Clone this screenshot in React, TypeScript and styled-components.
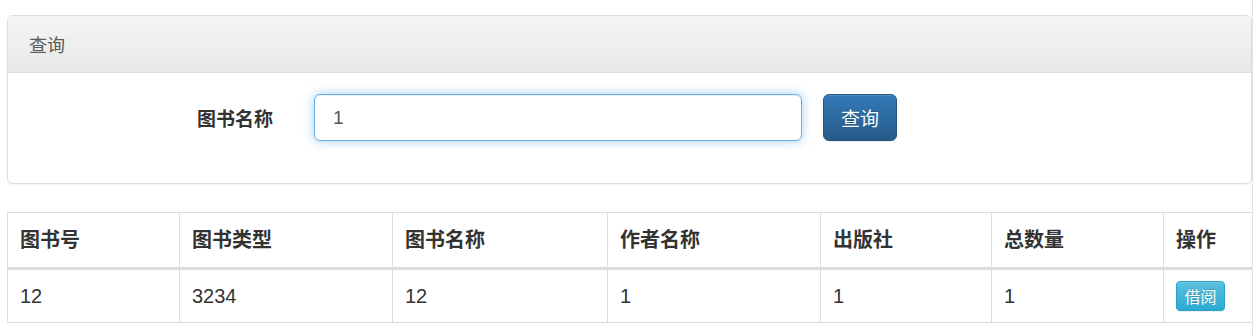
import React from "react";
import styled, { createGlobalStyle } from "styled-components";

const GlobalStyle = createGlobalStyle`
  html, body { margin: 0; padding: 0; background: #fff; }
  body {
    font-family: "Liberation Sans", "Noto Sans CJK SC", sans-serif;
    color: #333;
  }
  * { box-sizing: border-box; }
`;

const Page = styled.div`
  width: 1254px;
  min-height: 336px;
  padding: 15px 0 0 7px;
  display: flex;
  flex-direction: column;
  gap: 28px;
  position: relative;
  &::after {
    content: "";
    position: absolute;
    top: 0;
    bottom: 0;
    left: 1252px;
    width: 1px;
    background: #e2e2e2;
  }
`;

const Panel = styled.section`
  width: 1245px;
  border: 1px solid #dddddd;
  border-radius: 6px;
  box-shadow: 0 1px 2px rgba(0, 0, 0, 0.05);
  background: #fff;
  overflow: hidden;
`;

const PanelHeading = styled.div`
  height: 57px;
  padding: 0 21px;
  display: flex;
  align-items: center;
  font-size: 18px;
  color: #5a5a5a;
  background-image: linear-gradient(to bottom, #f5f5f5 0, #e8e8e8 100%);
  border-bottom: 1px solid #dddddd;
`;

const PanelBody = styled.div`
  padding: 21px 21px 42px;
`;

const FormRow = styled.form`
  display: flex;
  align-items: center;
  height: 47px;
`;

const Label = styled.label`
  width: 285px;
  padding-right: 41px;
  text-align: right;
  font-size: 19px;
  font-weight: bold;
  color: #333;
`;

const Input = styled.input`
  width: 488px;
  height: 47px;
  padding: 0 18px;
  font-family: "Liberation Sans", "Noto Sans CJK SC", sans-serif;
  font-size: 19px;
  color: #555;
  border: 1px solid #66afe9;
  border-radius: 6px;
  outline: none;
  box-shadow: inset 0 1px 1px rgba(0, 0, 0, 0.075), 0 0 11px rgba(102, 175, 233, 0.6);
`;

const Button = styled.button<{ $variant?: "primary" | "info"; $size?: "md" | "sm" }>`
  margin-left: ${(p) => (p.$size === "sm" ? "0" : "21px")};
  width: ${(p) => (p.$size === "sm" ? "49px" : "74px")};
  height: ${(p) => (p.$size === "sm" ? "30px" : "47px")};
  padding: 0;
  font-family: "Liberation Sans", "Noto Sans CJK SC", sans-serif;
  font-size: ${(p) => (p.$size === "sm" ? "16px" : "19px")};
  color: #fff;
  border-radius: ${(p) => (p.$size === "sm" ? "4px" : "6px")};
  border: 1px solid ${(p) => (p.$variant === "info" ? "#28a4c9" : "#245580")};
  background-image: ${(p) =>
    p.$variant === "info"
      ? "linear-gradient(to bottom, #5bc0de 0, #2aabd2 100%)"
      : "linear-gradient(to bottom, #337ab7 0, #265a88 100%)"};
  text-shadow: 0 -1px 0 rgba(0, 0, 0, 0.2);
  box-shadow: inset 0 1px 0 rgba(255, 255, 255, 0.15), 0 1px 1px rgba(0, 0, 0, 0.075);
  cursor: pointer;
  display: flex;
  align-items: center;
  justify-content: center;
`;

const Table = styled.table`
  width: 1245px;
  table-layout: fixed;
  border-collapse: collapse;
  border: 1px solid #dddddd;
`;

const Th = styled.th`
  text-align: left;
  padding: 16px 12px;
  line-height: 22px;
  font-size: 20px;
  font-weight: bold;
  color: #333;
  border: 1px solid #dddddd;
  border-bottom: 3px solid #dddddd;
`;

const Td = styled.td<{ $action?: boolean }>`
  padding: ${(p) => (p.$action ? "11px 12px" : "15px 12px")};
  line-height: 22px;
  font-size: 20px;
  color: #333;
  border: 1px solid #dddddd;
  vertical-align: middle;
`;

const columns = [
  { title: "图书号", width: 172 },
  { title: "图书类型", width: 213 },
  { title: "图书名称", width: 215 },
  { title: "作者名称", width: 213 },
  { title: "出版社", width: 171 },
  { title: "总数量", width: 172 },
  { title: "操作", width: 89 },
];

const rows = [["12", "3234", "12", "1", "1", "1"]];

export default function App() {
  return (
    <>
      <GlobalStyle />
      <Page>
        <Panel>
          <PanelHeading>查询</PanelHeading>
          <PanelBody>
            <FormRow onSubmit={(e) => e.preventDefault()}>
              <Label htmlFor="bookName">图书名称</Label>
              <Input id="bookName" defaultValue="1" />
              <Button type="submit" $variant="primary">查询</Button>
            </FormRow>
          </PanelBody>
        </Panel>
        <Table>
          <colgroup>
            {columns.map((c) => (
              <col key={c.title} style={{ width: c.width }} />
            ))}
          </colgroup>
          <thead>
            <tr>
              {columns.map((c) => (
                <Th key={c.title}>{c.title}</Th>
              ))}
            </tr>
          </thead>
          <tbody>
            {rows.map((r, i) => (
              <tr key={i}>
                {r.map((v, j) => (
                  <Td key={j}>{v}</Td>
                ))}
                <Td $action>
                  <Button $variant="info" $size="sm">借阅</Button>
                </Td>
              </tr>
            ))}
          </tbody>
        </Table>
      </Page>
    </>
  );
}
